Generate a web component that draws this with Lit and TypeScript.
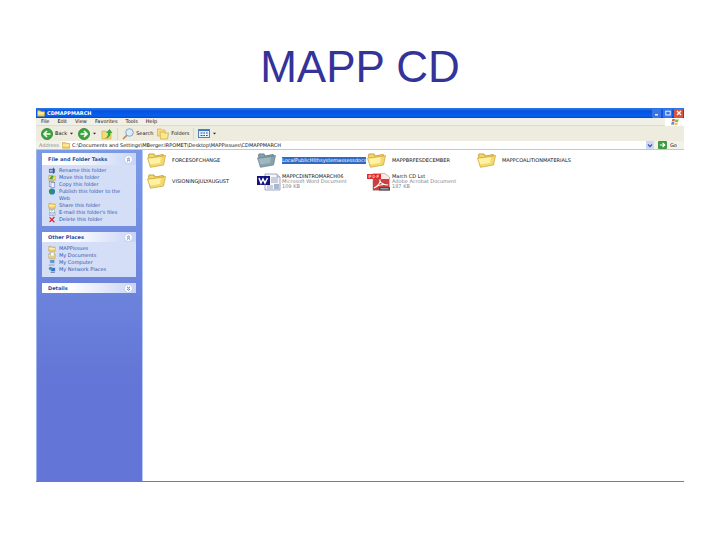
import { LitElement, html, css, svg, nothing } from "lit";
import { customElement, property } from "lit/decorators.js";

const folderShape = (light: string, mid: string, dark: string) => svg`
  <path d="M1 3 L2 1.5 L7 1.5 L8.5 3.5 L16 2 L17 3 L16.5 12 L3 14.5 Z" fill=${dark}/>
  <path d="M2 3.5 L2.5 2.5 L6.5 2.5 L8 4.5 L15.5 3 L16 6 L3 9 Z" fill=${mid}/>
  <path d="M.5 6 L13.5 4.5 L18.5 3.5 L16.5 13 L3.5 15.3 Z" fill=${mid} stroke=${dark} stroke-width=".7"/>
  <path d="M1.5 6.8 L14 5.3 L13 11 L3.2 12.5 Z" fill=${light}/>`;

const smallFolder = svg`
  <path d="M.5 2 H4 L5 3 H9.5 V9 H.5 Z" fill="#f5d76a" stroke="#b98f2c" stroke-width=".7"/>
  <path d="M1 4.5 H9 V6 H1 Z" fill="#fff6bd"/>`;

const glyphs: Record<string, { box: string; art: unknown }> = {
  folder: { box: "0 0 19 17", art: folderShape("#fff2a4", "#f4d96b", "#c8a13a") },
  selected: { box: "0 0 19 17", art: folderShape("#9fb7bd", "#86a2ab", "#64828f") },
  word: {
    box: "0 0 24 18",
    art: svg`
      <path d="M8 1 H20 L23 4 V17 H8 Z" fill="#f4f6fb" stroke="#8d96ad" stroke-width=".8"/>
      <path d="M20 1 V4 H23" fill="#c9d1e4" stroke="#8d96ad" stroke-width=".6"/>
      <path d="M14 5 H21 M14 7 H21 M14 9 H21 M10 13 H16 M10 15 H16" stroke="#8d96ad" stroke-width=".8"/>
      <rect x="17" y="11" width="5" height="5" fill="#a9b6d0"/>
      <rect x="0" y="3" width="13" height="9" fill="#14147c"/>
      <path d="M2 5 L4 10 L6 6 L8 10 L10.5 5" fill="none" stroke="#fff" stroke-width="1.5"/>`,
  },
  pdf: {
    box: "0 0 24 18",
    art: svg`
      <path d="M6 .5 H18 L22.5 4 V17.5 H6 Z" fill="#fbe9e7" stroke="#b98a8a" stroke-width=".6"/>
      <path d="M6 6 H22 V17 H6 Z" fill="#c8403f"/>
      <rect x="0" y="1" width="14" height="5" fill="#e02a2a"/>
      <path d="M2 5 V2.3 H4 V3.8 H2 M6 2.3 V4.8 H7 L8 3.6 L7 2.3 Z M10 5 V2.3 H12 M10 3.7 H12" fill="none" stroke="#ffd8d8" stroke-width=".7"/>
      <path d="M7 15 C11 13 14 9 13 7 C12 8 15 12 21 12 C17 11 11 12 7 15" fill="none" stroke="#fff" stroke-width="1.1"/>
      <rect x="12" y="14" width="11" height="3.5" fill="#4a4a55"/>
      <path d="M13.5 15.8 H21.5" stroke="#c8c8d0" stroke-width=".9"/>`,
  },
  small: { box: "0 0 10 10", art: smallFolder },
  rename: {
    box: "0 0 10 10",
    art: svg`<rect x="1" y="3" width="8" height="5" fill="#6d86c4" stroke="#3a4f8c" stroke-width=".7"/><path d="M2 5.5 H6" stroke="#fff"/><path d="M7 1 V9.5" stroke="#26315e"/>`,
  },
  move: {
    box: "0 0 10 10",
    art: svg`${smallFolder}<path d="M1 7 L5 1.5 L8 5 L6 5 L6 8 Z" fill="#3fa63d"/>`,
  },
  copy: {
    box: "0 0 10 10",
    art: svg`<rect x="1" y=".5" width="5.5" height="7" fill="#fff" stroke="#4c6a9c" stroke-width=".7"/><rect x="3.5" y="2.5" width="5.5" height="7" fill="#e8f0ff" stroke="#4c6a9c" stroke-width=".7"/>`,
  },
  globe: {
    box: "0 0 10 10",
    art: svg`<circle cx="5" cy="5" r="4.4" fill="#2d7fae"/><path d="M2 2 C5 0 6 3 4 5 C5 7 3 8 2 7 Z M6 4 L9 4 L7 8 Z" fill="#2f9c3f"/>`,
  },
  mail: {
    box: "0 0 10 10",
    art: svg`<rect x="1" y="1" width="7" height="8" fill="#fff" stroke="#6f8fb5" stroke-width=".6"/><path d="M2 5 H9.5 V9 H2 Z" fill="#dfeaf6" stroke="#6f8fb5" stroke-width=".6"/><path d="M2 5 L5.7 7.5 L9.5 5" fill="none" stroke="#6f8fb5" stroke-width=".6"/><path d="M3 2.5 H6" stroke="#3a9b55"/>`,
  },
  cross: {
    box: "0 0 10 10",
    art: svg`<path d="M1.5 2 L8.5 9 M8.5 1.5 L1.5 8.5" stroke="#d22a3a" stroke-width="1.8"/>`,
  },
  docs: {
    box: "0 0 10 10",
    art: svg`${smallFolder}<path d="M3 .5 H8 V6 H3 Z" fill="#fff" stroke="#8b93a8" stroke-width=".6"/>`,
  },
  computer: {
    box: "0 0 10 10",
    art: svg`<rect x="2" y="1" width="7" height="5" fill="#5d8edb" stroke="#d5dbe6" stroke-width=".9"/><path d="M1 8 H8 V9.5 H1 Z" fill="#d5dbe6" stroke="#7d8699" stroke-width=".5"/>`,
  },
  network: {
    box: "0 0 10 10",
    art: svg`<rect x="3.5" y="2.5" width="6" height="5" fill="#2f70cf" stroke="#cdd7e8" stroke-width=".7"/><circle cx="3" cy="3.5" r="2.6" fill="#3a9fb0"/><path d="M3 9 H9" stroke="#3c4d7d"/>`,
  },
  back: {
    box: "0 0 12 12",
    art: svg`<circle cx="6" cy="6" r="5.5" fill="#3da63c" stroke="#277f2c" stroke-width=".8"/><path d="M9.5 6 H3.5 M6 3 L3 6 L6 9" fill="none" stroke="#fff" stroke-width="1.6"/>`,
  },
  forward: {
    box: "0 0 12 12",
    art: svg`<circle cx="6" cy="6" r="5.5" fill="#3da63c" stroke="#277f2c" stroke-width=".8"/><path d="M2.5 6 H8.5 M6 3 L9 6 L6 9" fill="none" stroke="#fff" stroke-width="1.6"/>`,
  },
  up: {
    box: "0 0 12 12",
    art: svg`<path d="M1 3 H5 L6 4 H10 V11 H1 Z" fill="#f3dc7a" stroke="#c7a342" stroke-width=".6"/><path d="M3 10 C6 10 7 8 7 5 H5 L8.5 1 L11.5 5 H9.5 C9.5 9 7 11 3 10" fill="#3da63c"/>`,
  },
  search: {
    box: "0 0 12 12",
    art: svg`<circle cx="7.5" cy="4.5" r="3.8" fill="#d8ecfb" stroke="#86a5c8" stroke-width="1"/><path d="M4.8 7.3 L1 11" stroke="#b98a6a" stroke-width="1.7"/>`,
  },
  folders: {
    box: "0 0 12 12",
    art: svg`<path d="M.5 1 H4 L5 2 H8 V8 H.5 Z" fill="#f7df7e" stroke="#cda743" stroke-width=".6"/><path d="M3 4 H6.5 L7.5 5 H11.5 L10.5 11 H3.5 Z" fill="#fbe88f" stroke="#cda743" stroke-width=".7"/>`,
  },
  views: {
    box: "0 0 12 9",
    art: svg`<rect x=".5" y=".5" width="11" height="8" fill="#e6f1fd" stroke="#4b83bd"/><path d="M1 1.4 H11" stroke="#3a78c4" stroke-width="1.3"/><path d="M2.5 4 H4.5 M5.3 4 H7 M8 4 H9.7 M2.5 6.5 H4.5 M5.3 6.5 H7 M8 6.5 H9.7" stroke="#2a5a9a" stroke-width="1.2"/>`,
  },
  flag: {
    box: "0 0 12 10",
    art: svg`<path d="M2.5 1.5 Q4 .5 6 1.5 L5.4 4.6 Q3.6 3.8 2 4.6 Z" fill="#e2683a"/><path d="M6.6 1.7 Q8.5 2.5 10.6 1.5 L9.8 4.7 Q8 5.5 6 4.8 Z" fill="#7eb648"/><path d="M1.8 5.3 Q3.5 4.5 5.2 5.3 L4.6 8.4 Q3 7.6 1.2 8.4 Z" fill="#5588d8"/><path d="M5.8 5.5 Q7.8 6.3 9.6 5.4 L8.9 8.5 Q7 9.3 5.2 8.6 Z" fill="#efc440"/>`,
  },
  min: { box: "0 0 8 8", art: svg`<path d="M2 5.8 H5" stroke="#fff" stroke-width="1.3"/>` },
  max: { box: "0 0 8 8", art: svg`<rect x="1.8" y="2.2" width="4.4" height="3.8" fill="none" stroke="#fff" stroke-width=".9"/>` },
  close: { box: "0 0 8 8", art: svg`<path d="M2 2 L6 6 M6 2 L2 6" stroke="#fff" stroke-width="1.2"/>` },
  go: { box: "0 0 9 8", art: svg`<rect width="9" height="8" rx="1" fill="#3a9c3d"/><path d="M1.8 4 H6.5 M4.6 2 L6.8 4 L4.6 6" fill="none" stroke="#fff" stroke-width="1.1"/>` },
  down: { box: "0 0 7 7", art: svg`<path d="M1.5 2.5 L3.5 4.7 L5.5 2.5" fill="none" stroke="#3c5590" stroke-width="1.2"/>` },
  caret: { box: "0 0 5 5", art: svg`<path d="M1 1.8 H4 L2.5 3.6 Z" fill="#222"/>` },
  collapse: { box: "0 0 9 9", art: svg`<circle cx="4.5" cy="4.5" r="4" fill="#fff" stroke="#b6c4e8" stroke-width=".7"/><path d="M3 4.3 L4.5 3 L6 4.3 M3 6.4 L4.5 5.1 L6 6.4" fill="none" stroke="#36509a" stroke-width=".8"/>` },
  expand: { box: "0 0 9 9", art: svg`<circle cx="4.5" cy="4.5" r="4" fill="#fff" stroke="#b6c4e8" stroke-width=".7"/><path d="M3 2.8 L4.5 4.1 L6 2.8 M3 4.9 L4.5 6.2 L6 4.9" fill="none" stroke="#36509a" stroke-width=".8"/>` },
};

const glyph = (name: string) =>
  html`<svg class="glyph ${name}" viewBox=${glyphs[name].box} aria-hidden="true">${glyphs[name].art}</svg>`;

const reset = css`
  * { box-sizing: border-box; }
  button {
    border: 0; padding: 0; margin: 0; background: none; color: inherit;
    font: inherit; display: flex; align-items: center;
  }
  .glyph { display: block; flex: none; }
`;

@customElement("task-panel")
class TaskPanel extends LitElement {
  @property() heading = "";
  @property({ attribute: false }) items: [string, string][] = [];
  @property({ type: Boolean, reflect: true }) primary = false;

  static styles = [reset, css`
    :host { display: block; background: #d5def7; }
    .head {
      display: flex; align-items: center; justify-content: space-between;
      height: 10px; padding: 0 3px 0 6px;
      background: linear-gradient(90deg, #fff 30%, #c8d4f6);
      color: #2a4c9c;
    }
    :host([primary]) .head { height: 12px; }
    h2 { margin: 0; font-size: 5px; line-height: 8px; font-weight: bold; }
    .list { list-style: none; margin: 0; padding: 3px 10px 4px 6px; }
    :host([primary]) .list { padding: 2px 10px 3px 6px; }
    .row { display: flex; align-items: flex-start; gap: 3px; line-height: 7px; }
    a { color: #2f56a8; text-decoration: none; }
    .list .glyph { width: 8px; height: 7px; }
    .collapse, .expand { width: 9px; height: 9px; }
  `];

  render() {
    return html`
      <div class="head">
        <h2>${this.heading}</h2>
        <button aria-label="Toggle ${this.heading}">${glyph(this.items.length ? "collapse" : "expand")}</button>
      </div>
      ${this.items.length
        ? html`<ul class="list">${this.items.map(([icon, label]) =>
            html`<li class="row">${glyph(icon)}<a href="#">${label}</a></li>`)}</ul>`
        : nothing}`;
  }
}

interface Entry { icon: string; name: string; details?: string[]; selected?: boolean }

const entries: Entry[] = [
  { icon: "folder", name: "FORCESOFCHANGE" },
  { icon: "selected", name: "LocalPublicHlthsystemassessdocs", selected: true },
  { icon: "folder", name: "MAPPBRFESDECEMBER" },
  { icon: "folder", name: "MAPPCOALITIONMATERIALS" },
  { icon: "folder", name: "VISIONINGJULYAUGUST" },
  { icon: "word", name: "MAPPCDINTROMARCH06", details: ["Microsoft Word Document", "109 KB"] },
  { icon: "pdf", name: "March CD Lst", details: ["Adobe Acrobat Document", "187 KB"] },
];

const tasks: [string, string][] = [
  ["rename", "Rename this folder"],
  ["move", "Move this folder"],
  ["copy", "Copy this folder"],
  ["globe", "Publish this folder to the Web"],
  ["small", "Share this folder"],
  ["mail", "E-mail this folder's files"],
  ["cross", "Delete this folder"],
];

const places: [string, string][] = [
  ["small", "MAPPissues"],
  ["docs", "My Documents"],
  ["computer", "My Computer"],
  ["network", "My Network Places"],
];

@customElement("app-root")
class AppRoot extends LitElement {
  static styles = [reset, css`
    :host {
      display: flex; flex-direction: column; min-height: 100vh; padding: 0 5% 58px;
      box-sizing: border-box; background: #fff; color: #111;
      font-family: "DejaVu Sans", Verdana, sans-serif; font-size: 5px; line-height: 7px;
    }
    .title {
      margin: 0; padding: 42px 0 16px; text-align: center;
      font-family: "Liberation Sans", Arial, sans-serif;
      font-size: 44px; line-height: 50px; font-weight: normal; color: #333399;
    }
    .window { flex: 1; display: flex; flex-direction: column; border-bottom: 1px solid #4f88b4; }
    .titlebar {
      display: flex; align-items: center; gap: 2px; height: 10px; padding: 0 1px;
      background: linear-gradient(#2d7cf0, #0653dd 30%, #0560f2 80%, #0347c4);
      color: #fff; font-weight: bold;
    }
    .titlebar .small { width: 8px; height: 8px; }
    .caption { flex: 1; }
    .controls { display: flex; gap: 2px; }
    .control { width: 9px; height: 9px; justify-content: center; background: #3c74e4; border-radius: 1px; }
    .control.end { background: #d9553a; }
    .min, .max, .close { width: 8px; height: 8px; }
    .menubar { display: flex; align-items: center; height: 8px; padding-left: 5px; background: #f1f0e8; border-bottom: 1px solid #dedccb; }
    .menus { flex: 1; display: flex; gap: 8px; }
    .brand { width: 19px; height: 8px; display: flex; justify-content: center; background: #fff; }
    .flag { width: 12px; height: 8px; }
    .toolbar { display: flex; align-items: center; height: 15px; padding-left: 5px; gap: 4px; background: #eeecdf; }
    .toolbar button { gap: 2px; }
    .back, .forward, .up, .search, .folders { width: 12px; height: 12px; }
    .views { width: 12px; height: 9px; }
    .caret { width: 5px; height: 5px; }
    .rule { width: 1px; height: 12px; background: #dbd8c8; }
    .address { display: flex; align-items: center; height: 9px; padding-left: 3px; background: #f3f2ea; border-bottom: 1px solid #b9ccd6; }
    .address label { width: 22px; color: #8a8a84; }
    .field { flex: 1; display: flex; align-items: center; gap: 2px; height: 8px; background: #fff; padding-left: 1px; }
    .field .small { width: 8px; height: 8px; }
    .path { flex: 1; min-width: 0; height: 8px; border: 0; padding: 0; background: none; font: inherit; color: #111; outline: none; }
    .drop { height: 8px; background: #c9d8fb; }
    .down { width: 8px; height: 7px; }
    .go-button { width: 30px; gap: 3px; padding-left: 4px; }
    .go { width: 9px; height: 8px; }
    .body { flex: 1; display: flex; }
    .side {
      width: 107px; display: flex; flex-direction: column; gap: 6px; padding: 3px 6px 0 5px;
      background: linear-gradient(#7a9ae6, #6375d6 70%);
      border-left: 1px solid #9db2ec; border-right: 1px solid #b9c8f4;
    }
    .files {
      flex: 1; display: grid; grid-template-columns: repeat(auto-fill, 110px);
      grid-auto-rows: 21px; align-content: start; margin: 0; padding: 0 0 0 4px; list-style: none;
    }
    .entry { display: flex; align-items: center; min-width: 0; }
    .art { width: 24px; display: flex; }
    .folder, .selected { width: 19px; height: 17px; }
    .word, .pdf { width: 24px; height: 18px; }
    .text { line-height: 5px; white-space: nowrap; margin-left: 1px; }
    .mark .name { background: #316ac5; color: #fff; line-height: 7px; }
    .meta { color: #85858a; }
  `];

  private entry(e: Entry) {
    return html`<li class="entry ${e.selected ? "mark" : ""}">
      <span class="art">${glyph(e.icon)}</span>
      <div class="text">
        <div class="name">${e.name}</div>
        ${(e.details ?? []).map((d) => html`<div class="meta">${d}</div>`)}
      </div>
    </li>`;
  }

  render() {
    return html`
      <h1 class="title">MAPP CD</h1>
      <section class="window">
        <header class="titlebar">
          ${glyph("small")}<span class="caption">CDMAPPMARCH</span>
          <div class="controls">
            <button class="control" aria-label="Minimize">${glyph("min")}</button>
            <button class="control" aria-label="Maximize">${glyph("max")}</button>
            <button class="control end" aria-label="Close">${glyph("close")}</button>
          </div>
        </header>
        <nav class="menubar">
          <div class="menus">
            ${["File", "Edit", "View", "Favorites", "Tools", "Help"].map((m) => html`<button>${m}</button>`)}
          </div>
          <span class="brand">${glyph("flag")}</span>
        </nav>
        <div class="toolbar">
          <button>${glyph("back")}Back${glyph("caret")}</button>
          <button aria-label="Forward">${glyph("forward")}${glyph("caret")}</button>
          <button aria-label="Up">${glyph("up")}</button>
          <span class="rule"></span>
          <button>${glyph("search")}Search</button>
          <button>${glyph("folders")}Folders</button>
          <span class="rule"></span>
          <button aria-label="Views">${glyph("views")}${glyph("caret")}</button>
        </div>
        <div class="address">
          <label for="path">Address</label>
          <div class="field">
            ${glyph("small")}
            <input class="path" id="path" .value=${"C:\\Documents and Settings\\MBerger.IRPOMET\\Desktop\\MAPPissues\\CDMAPPMARCH"}>
            <button class="drop" aria-label="Show addresses">${glyph("down")}</button>
          </div>
          <button class="go-button">${glyph("go")}Go</button>
        </div>
        <div class="body">
          <aside class="side">
            <task-panel primary heading="File and Folder Tasks" .items=${tasks}></task-panel>
            <task-panel heading="Other Places" .items=${places}></task-panel>
            <task-panel heading="Details"></task-panel>
          </aside>
          <ul class="files">${entries.map((e) => this.entry(e))}</ul>
        </div>
      </section>`;
  }
}
